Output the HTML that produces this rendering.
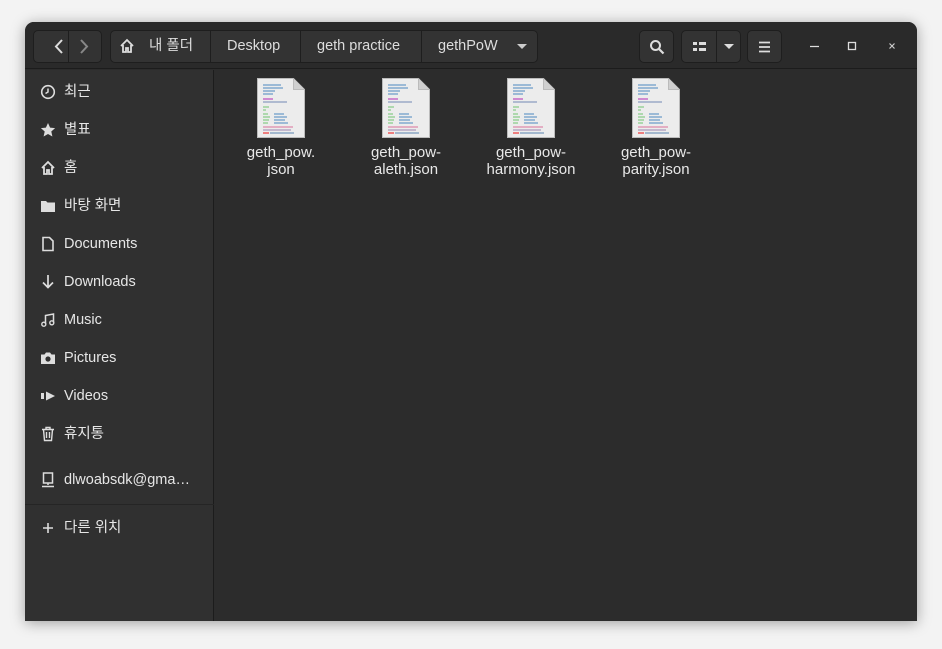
<!DOCTYPE html>
<html><head><meta charset="utf-8"><style>
*{margin:0;padding:0;box-sizing:border-box}
body{width:942px;height:649px;background:#f3f3f3;font-family:"Liberation Sans","Noto Sans CJK KR",sans-serif;overflow:hidden;position:relative}
.win{position:absolute;left:25px;top:22px;width:892px;height:599px;background:#2c2c2c;border-radius:9px 9px 0 0;overflow:hidden;box-shadow:0 2px 14px rgba(0,0,0,.35)}
.hdr{position:absolute;left:0;top:0;width:892px;height:47px;background:#2a2a2a;border-bottom:1px solid #1c1c1c}
.btn{position:absolute;top:8px;height:33px;background:#333;border:1px solid #1e1e1e;border-radius:5px;color:#ddd;font-size:14.5px}
.btn span{position:absolute;top:0;line-height:31px}
.side{position:absolute;left:0;top:48px;width:189px;height:551px;background:#303030;border-right:1px solid #1c1c1c}
.it{position:absolute;left:0;height:38px;width:189px;color:#e6e6e6;font-size:14.5px;line-height:38px}
.it span{position:absolute;left:39px}
.it svg{position:absolute;left:15px;top:11px}
.f{position:absolute;top:56px;width:120px;text-align:center;color:#e8e8e8;font-size:15px;line-height:17px}
.doc{margin:0 auto 6px;width:48px;height:60px;position:relative}
</style></head><body>
<div class="win">
<div class="hdr">
 <div class="btn" style="left:8px;width:69px">
  <svg width="69" height="31" style="position:absolute;left:0;top:0"><path d="M28 9l-6 6.5 6 6.5" stroke="#ddd" stroke-width="2" fill="none"/><line x1="34.5" y1="0" x2="34.5" y2="31" stroke="#1e1e1e"/><path d="M47 9l6 6.5-6 6.5" stroke="#888" stroke-width="2" fill="none"/></svg>
 </div>
 <div class="btn" style="left:85px;width:428px">
  <svg width="16" height="16" style="position:absolute;left:8px;top:7px"><path d="M2 8L8 2l6 6M4 7v7h3v-4h2v4h3V7" stroke="#ddd" stroke-width="1.8" fill="none"/></svg>
  <span style="left:38px">내 폴더</span>
  <div style="position:absolute;left:99px;top:0;width:1px;height:31px;background:#1e1e1e"></div>
  <span style="left:116px">Desktop</span>
  <div style="position:absolute;left:189px;top:0;width:1px;height:31px;background:#1e1e1e"></div>
  <span style="left:206px">geth practice</span>
  <div style="position:absolute;left:310px;top:0;width:1px;height:31px;background:#1e1e1e"></div>
  <span style="left:327px">gethPoW</span>
  <svg width="10" height="6" style="position:absolute;left:406px;top:13px"><path d="M0 0h10L5 5z" fill="#ccc"/></svg>
 </div>
 <div class="btn" style="left:614px;width:35px"><svg width="16" height="16" style="position:absolute;left:9px;top:8px"><circle cx="6.5" cy="6.5" r="4.5" stroke="#ddd" stroke-width="2" fill="none"/><path d="M10 10l4.5 4.5" stroke="#ddd" stroke-width="2.2"/></svg></div>
 <div class="btn" style="left:656px;width:60px"><svg width="60" height="31" style="position:absolute;left:0;top:0"><rect x="11" y="11" width="4" height="3" fill="#ddd"/><rect x="17" y="11" width="7" height="3" fill="#ddd"/><rect x="11" y="17" width="4" height="3" fill="#ddd"/><rect x="17" y="17" width="7" height="3" fill="#ddd"/><line x1="34.5" y1="0" x2="34.5" y2="31" stroke="#1e1e1e"/><path d="M42 13h10l-5 5z" fill="#ddd"/></svg></div>
 <div class="btn" style="left:722px;width:35px"><svg width="14" height="12" style="position:absolute;left:10px;top:10px"><path d="M1 1.5h11M1 6h11M1 10.5h11" stroke="#ddd" stroke-width="1.8"/></svg></div>
 <svg width="140" height="47" style="position:absolute;left:760px;top:0"><path d="M25 24.5h9" stroke="#ddd" stroke-width="1.3"/><rect x="63.5" y="20.5" width="7" height="7" stroke="#ddd" stroke-width="1.3" fill="none"/><path d="M104.5 21.5l5 5M109.5 21.5l-5 5" stroke="#ccc" stroke-width="1.2"/></svg>
</div>
<div class="side">
 <div class="it" style="top:3px"><svg width="16" height="16"><circle cx="8" cy="8" r="6.3" stroke="#ddd" stroke-width="1.6" fill="none"/><path d="M8 4.5V8l-2.5 1.5" stroke="#ddd" stroke-width="1.5" fill="none"/></svg><span>최근</span></div>
 <div class="it" style="top:41px"><svg width="16" height="16"><path d="M8 1l2.1 4.6 5 .5-3.8 3.4 1.1 5L8 12l-4.4 2.5 1.1-5L.9 6.1l5-.5z" fill="#ddd"/></svg><span>별표</span></div>
 <div class="it" style="top:79px"><svg width="16" height="16"><path d="M2 8L8 2l6 6M4 7v7h3v-4h2v4h3V7" stroke="#ddd" stroke-width="1.8" fill="none"/></svg><span>홈</span></div>
 <div class="it" style="top:117px"><svg width="16" height="16"><path d="M1 3h5l1.5 1.5H15V14H1z" fill="#ddd"/></svg><span>바탕 화면</span></div>
 <div class="it" style="top:155px"><svg width="16" height="16"><path d="M3 1.5h6.5L13 5v9.5H3z" stroke="#ddd" stroke-width="1.6" fill="none"/></svg><span>Documents</span></div>
 <div class="it" style="top:193px"><svg width="16" height="16"><path d="M8 1v12M3 8.5l5 5 5-5" stroke="#ddd" stroke-width="1.7" fill="none"/></svg><span>Downloads</span></div>
 <div class="it" style="top:231px"><svg width="16" height="16"><path d="M5.5 12V3.5l8-1.5v8.5" stroke="#ddd" stroke-width="1.5" fill="none"/><circle cx="3.8" cy="12.2" r="2" stroke="#ddd" stroke-width="1.4" fill="none"/><circle cx="11.8" cy="10.8" r="2" stroke="#ddd" stroke-width="1.4" fill="none"/></svg><span>Music</span></div>
 <div class="it" style="top:269px"><svg width="16" height="16"><path d="M1 4.5h3.5l1.5-2h4l1.5 2H15V14H1z" fill="#ddd"/><circle cx="8" cy="9" r="2.6" fill="#303030"/></svg><span>Pictures</span></div>
 <div class="it" style="top:307px"><svg width="16" height="16"><rect x="1" y="5" width="3" height="6" fill="#ddd"/><path d="M6 3.5l9 4.5-9 4.5z" fill="#ddd"/></svg><span>Videos</span></div>
 <div class="it" style="top:345px"><svg width="16" height="16"><path d="M2 3.5h12M6 3.5V1.5h4v2M3.5 3.5l1 11h7l1-11M6.5 6v6M9.5 6v6" stroke="#ddd" stroke-width="1.4" fill="none"/></svg><span>휴지통</span></div>
 <div class="it" style="top:391px"><svg width="16" height="16"><rect x="3.5" y="1" width="9" height="10" stroke="#ddd" stroke-width="1.5" fill="none"/><path d="M8 11v2M2 14.5h12" stroke="#ddd" stroke-width="1.5"/></svg><span>dlwoabsdk@gma…</span></div>
 <div style="position:absolute;left:0;top:434px;width:189px;height:1px;background:#252525"></div>
 <div class="it" style="top:439px"><svg width="16" height="16"><path d="M8 3v10M3 8h10" stroke="#ddd" stroke-width="1.6"/></svg><span>다른 위치</span></div>
</div>
<div style="position:absolute;left:190px;top:48px;width:702px;height:551px">
 <div class="f" style="left:6px;top:8px"><div class="doc"><svg width="48" height="60"><path d="M0.5 0.5h36l11 11v48H.5z" fill="#ececec" stroke="#bbb"/><path d="M36.5 0.5v11h11" fill="#d0d0d0" stroke="#bbb"/><g stroke-width="1.3"><path d="M6 7h18M6 10h20M6 13h12M6 16h10" stroke="#6b9cc8"/><path d="M6 21h10" stroke="#c050c0"/><path d="M6 24h24" stroke="#8a9cc0"/><path d="M6 29h6M6 32h3M6 36h5M6 39h7M6 42h6M6 45h5" stroke="#8c8"/><path d="M17 36h10M17 39h13M17 42h11M17 45h14" stroke="#6b9cc8"/><path d="M6 49h30" stroke="#d8a"/><path d="M6 52h28" stroke="#a9b"/><path d="M6 55h6" stroke="#e44"/><path d="M13 55h24" stroke="#79b"/></g></svg></div>geth_pow.<br>json</div>
 <div class="f" style="left:131px;top:8px"><div class="doc"><svg width="48" height="60"><path d="M0.5 0.5h36l11 11v48H.5z" fill="#ececec" stroke="#bbb"/><path d="M36.5 0.5v11h11" fill="#d0d0d0" stroke="#bbb"/><g stroke-width="1.3"><path d="M6 7h18M6 10h20M6 13h12M6 16h10" stroke="#6b9cc8"/><path d="M6 21h10" stroke="#c050c0"/><path d="M6 24h24" stroke="#8a9cc0"/><path d="M6 29h6M6 32h3M6 36h5M6 39h7M6 42h6M6 45h5" stroke="#8c8"/><path d="M17 36h10M17 39h13M17 42h11M17 45h14" stroke="#6b9cc8"/><path d="M6 49h30" stroke="#d8a"/><path d="M6 52h28" stroke="#a9b"/><path d="M6 55h6" stroke="#e44"/><path d="M13 55h24" stroke="#79b"/></g></svg></div>geth_pow-<br>aleth.json</div>
 <div class="f" style="left:256px;top:8px"><div class="doc"><svg width="48" height="60"><path d="M0.5 0.5h36l11 11v48H.5z" fill="#ececec" stroke="#bbb"/><path d="M36.5 0.5v11h11" fill="#d0d0d0" stroke="#bbb"/><g stroke-width="1.3"><path d="M6 7h18M6 10h20M6 13h12M6 16h10" stroke="#6b9cc8"/><path d="M6 21h10" stroke="#c050c0"/><path d="M6 24h24" stroke="#8a9cc0"/><path d="M6 29h6M6 32h3M6 36h5M6 39h7M6 42h6M6 45h5" stroke="#8c8"/><path d="M17 36h10M17 39h13M17 42h11M17 45h14" stroke="#6b9cc8"/><path d="M6 49h30" stroke="#d8a"/><path d="M6 52h28" stroke="#a9b"/><path d="M6 55h6" stroke="#e44"/><path d="M13 55h24" stroke="#79b"/></g></svg></div>geth_pow-<br>harmony.json</div>
 <div class="f" style="left:381px;top:8px"><div class="doc"><svg width="48" height="60"><path d="M0.5 0.5h36l11 11v48H.5z" fill="#ececec" stroke="#bbb"/><path d="M36.5 0.5v11h11" fill="#d0d0d0" stroke="#bbb"/><g stroke-width="1.3"><path d="M6 7h18M6 10h20M6 13h12M6 16h10" stroke="#6b9cc8"/><path d="M6 21h10" stroke="#c050c0"/><path d="M6 24h24" stroke="#8a9cc0"/><path d="M6 29h6M6 32h3M6 36h5M6 39h7M6 42h6M6 45h5" stroke="#8c8"/><path d="M17 36h10M17 39h13M17 42h11M17 45h14" stroke="#6b9cc8"/><path d="M6 49h30" stroke="#d8a"/><path d="M6 52h28" stroke="#a9b"/><path d="M6 55h6" stroke="#e44"/><path d="M13 55h24" stroke="#79b"/></g></svg></div>geth_pow-<br>parity.json</div>
</div>
</div>
</body></html>
